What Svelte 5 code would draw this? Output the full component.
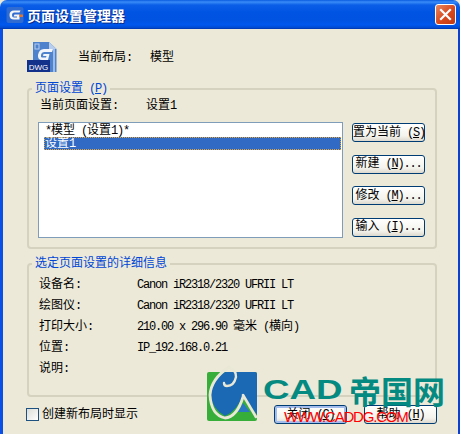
<script>
  const details = [
    ['设备名:', 'Canon iR2318/2320 UFRII LT'],
    ['绘图仪:', 'Canon iR2318/2320 UFRII LT'],
    ['打印大小:', '210.00 x 296.90 毫米 (横向)'],
    ['位置:', 'IP_192.168.0.21'],
    ['说明:', '']
  ];
  const sideButtons = [
    { name: '置为当前', key: 'S', tail: '' },
    { name: '新建', key: 'N', tail: '...' },
    { name: '修改', key: 'M', tail: '...' },
    { name: '输入', key: 'I', tail: '...' }
  ];

  // latin runs are squeezed so they keep the 6px cell of the dialog font
  const runs = (s) => s.match(/[\x00-\x7f]+|[^\x00-\x7f]+/g) ?? [];
</script>

{#snippet txt(s)}
  {#each runs(s) as run}{#if run.charCodeAt(0) < 128}<span class="lat">{run}</span>{:else}{run}{/if}{/each}
{/snippet}

{#snippet btn(item, extra = '')}
  <button class="btn {extra}">{item.name}<span class="lat">{' '}(<u>{item.key}</u>){item.tail}</span></button>
{/snippet}

<div class="window">
  <header class="titlebar">
    <svg class="app-icon" width="18" height="18" viewBox="0 0 18 18" aria-hidden="true">
      <rect x="0.5" y="1" width="17" height="16" rx="2" fill="#2f6bd0" />
      <path d="M14.500 4.500 H8 Q3.500 4.500 3.500 9 Q3.500 13.500 8 13.500 H13.500 V8.500 H8.500 L7.500 10.500 H11 V11.500 H8 Q6 11.500 6 9 Q6 6.500 8 6.500 H13.500 Z" fill="#f4f4f4" />
      <path d="M13.500 8.500 H17 V11 H13.500 Z" fill="#e0762a" />
    </svg>
    <span class="title">页面设置管理器</span>
    <button class="close" aria-label="关闭">
      <svg width="13" height="13" viewBox="0 0 13 13"><path d="M2 2 L11 11 M11 2 L2 11" stroke="#fff" stroke-width="2.2" stroke-linecap="square" /></svg>
    </button>
  </header>

  <main class="body">
    <div class="layout-row">
      <svg class="dwg" width="32" height="34" viewBox="0 0 32 34" aria-hidden="true">
        <path d="M6 1 H22 L29.500 8 V31 H6 Z" fill="#4f82cc" />
        <path d="M22 1 V8 H29.500 Z" fill="#b8cdec" />
        <rect x="8" y="3" width="4" height="5" fill="none" stroke="#b7cdf0" stroke-width="1" />
        <path d="M27 8 V31" stroke="#9cbce6" stroke-width="2" />
        <path d="M26 8 H17 Q12 8 11 14 Q10.500 19 15 19 H21 L22.500 13 H16.500 L16 15 H19.500 L19 16.500 H15 Q13.500 16.500 14 14 Q14.500 11 17.500 11 H25 Z" fill="#f2f6fc" />
        <rect x="0" y="19" width="23" height="12" fill="#13308a" />
        <text class="dwg-label" x="11.500" y="28.500" text-anchor="middle">DWG</text>
      </svg>
      <span class="layout-label">{@render txt('当前布局:')}</span>
      <span>模型</span>
    </div>

    <fieldset class="group setup">
      <legend>页面设置<span class="lat">{' '}(<u>P</u>)</span></legend>
      <div class="current-row">
        <span class="current-label">{@render txt('当前页面设置:')}</span>
        <span>{@render txt('设置1')}</span>
      </div>
      <div class="setup-main">
        <div class="listbox">
          <div class="item">{@render txt('*模型 (设置1)*')}</div>
          <div class="item selected">{@render txt('设置1')}</div>
        </div>
        <div class="side-buttons">
          {#each sideButtons as item}
            {@render btn(item)}
          {/each}
        </div>
      </div>
    </fieldset>

    <fieldset class="group info">
      <legend>选定页面设置的详细信息</legend>
      <dl>
        {#each details as [name, value]}
          <dt>{@render txt(name)}</dt>
          <dd>{@render txt(value)}</dd>
        {/each}
      </dl>
    </fieldset>

    <footer class="footer">
      <label class="check"><span class="box"></span>创建新布局时显示</label>
      <div class="footer-buttons">
        {@render btn({ name: '关闭', key: 'C', tail: '' }, 'default')}
        {@render btn({ name: '帮助', key: 'H', tail: '' })}
      </div>
    </footer>
  </main>

  <div class="watermark">
    <svg width="53" height="57" viewBox="0 0 53 57" aria-hidden="true">
      <rect x="2" y="7" width="50" height="49" rx="2" fill="#37ad3a" />
      <path d="M20 7 H50 Q52 7 52 9 V50 L38 30 Q32 46 20 51 Q7 44 6 30 Q8 14 20 7 Z" fill="#1b68b5" />
      <path d="M38 38 L45 47 H33 Z" fill="#2a78c4" />
      <g fill="none" stroke="#e9e7d6" stroke-linecap="round">
        <path d="M24 2 Q6 14 5 30 Q6 50 20 53 Q32 52 38 32" stroke-width="2.800" />
        <path d="M38 30 L51 52" stroke-width="2.600" />
        <path d="M24 3 Q31 4 31 12 Q29 21 22 21 Q19 21 19 18" stroke-width="2.400" />
      </g>
    </svg>
    <div class="brand"><span class="brand-latin">CAD</span><span class="brand-cjk">帝国网</span></div>
    <span class="url">WWW.CADDG.COM</span>
  </div>
</div>

<style>
  :global(body) {
    margin: 0;
    background: #ece9d8;
  }

  .window {
    position: relative;
    width: 460px;
    height: 434px;
    overflow: hidden;
    font: 12px/14px "Liberation Mono", "Noto Sans CJK SC", monospace;
    color: #000;
    background: #ece9d8;
    border-radius: 7px 7px 0 0;
  }

  .lat {
    letter-spacing: -1.2px;
    white-space: pre;
  }

  .titlebar {
    height: 29px;
    box-sizing: border-box;
    display: flex;
    align-items: center;
    padding: 0 4px 0 6px;
    background: linear-gradient(180deg, #0a5be0 0, #3a8cf8 2px, #0a5ee6 5px, #0054e3 12px, #0053e1 20px, #0058ee 25px, #0048cc 28px, #0031a8 29px);
  }

  .app-icon {
    flex: none;
  }

  .title {
    margin-left: 3px;
    font: bold 14px/18px "Noto Sans CJK SC", sans-serif;
    color: #fff;
    text-shadow: 1px 1px 0 #0a2a88;
  }

  .close {
    margin-left: auto;
    width: 21px;
    height: 21px;
    padding: 0;
    display: grid;
    place-items: center;
    border: 1px solid #fff;
    border-radius: 3px;
    background: linear-gradient(135deg, #e8875f, #d8481c 55%, #c43a12);
  }

  .body {
    height: 405px;
    box-sizing: border-box;
    display: flex;
    flex-direction: column;
    padding: 0 21px 0 24px;
    border-left: 3px solid #0a50e6;
    border-right: 2px solid #0a3fd0;
  }

  .layout-row {
    height: 53px;
    box-sizing: border-box;
    padding-top: 5px;
    display: flex;
    align-items: center;
    flex: none;
  }

  .dwg {
    flex: none;
    margin-right: 19px;
  }

  .dwg-label {
    font: 8px "Liberation Sans", sans-serif;
    fill: #fff;
  }

  .layout-label {
    width: 72px;
  }

  .group {
    margin: 0;
    padding: 0;
    box-sizing: border-box;
    border: 2px solid #d5d2bf;
    border-radius: 4px;
    min-width: 0;
    flex: none;
  }

  .group legend {
    margin-left: 3px;
    padding: 0 3px;
    color: #0046d5;
    line-height: 14px;
  }

  .setup {
    height: 167px;
  }

  .current-row {
    display: flex;
    padding: 3px 0 0 11px;
    height: 16px;
  }

  .current-label {
    width: 106px;
  }

  .setup-main {
    display: flex;
    padding: 7px 0 0 9px;
  }

  .listbox {
    width: 305px;
    height: 116px;
    box-sizing: border-box;
    border: 1px solid #7f9db9;
    background: #fff;
    padding: 1px 1px 1px 5px;
    flex: none;
  }

  .item {
    height: 13px;
    line-height: 14px;
    padding-left: 1px;
    white-space: pre;
  }

  .item.selected {
    background: #316ac5;
    color: #fff;
    outline: 1px dotted #e2a33a;
    outline-offset: -1px;
  }

  .side-buttons {
    display: flex;
    flex-direction: column;
    gap: 12.500px;
    margin: 1px 0 0 9px;
  }

  .btn {
    width: 73px;
    height: 19px;
    padding: 0;
    font: inherit;
    color: #000;
    border: 1px solid #003c74;
    border-radius: 3px;
    background: linear-gradient(180deg, #fff, #f4f3ec 70%, #dcd8ce);
    white-space: pre;
  }

  .info {
    margin-top: 8px;
    height: 140px;
  }

  dl {
    margin: 0;
    padding: 3px 0 0 10px;
    display: grid;
    grid-template-columns: 98px 1fr;
    grid-auto-rows: 21px;
    align-items: center;
  }

  dd {
    margin: 0;
  }

  .footer {
    display: flex;
    align-items: center;
    justify-content: space-between;
    margin-top: 8px;
  }

  .check {
    display: flex;
    align-items: center;
    gap: 3px;
    margin-left: -1px;
  }

  .box {
    width: 11px;
    height: 11px;
    border: 1px solid #1c5180;
    background: linear-gradient(135deg, #dcdcd7, #fff);
  }

  .footer-buttons {
    display: flex;
    gap: 17px;
  }

  .btn.default {
    box-shadow: inset 0 0 0 2px #a4bcec;
  }

  .watermark {
    position: absolute;
    left: 205px;
    top: 365px;
    width: 250px;
    height: 60px;
  }

  .watermark svg {
    position: absolute;
    left: 0;
    top: 0;
  }

  .brand {
    position: absolute;
    left: 58px;
    top: 9px;
    display: flex;
    align-items: center;
    height: 32px;
    color: #058a82;
    white-space: nowrap;
  }

  .brand-latin {
    width: 86px;
    font: bold 27px/32px "Liberation Sans", sans-serif;
    transform: scaleX(1.36);
    transform-origin: left;
  }

  .brand-cjk {
    font: bold 32px/32px "Noto Sans CJK SC", sans-serif;
  }

  .url {
    position: absolute;
    left: 79px;
    top: 44px;
    font: 15px/16px "Liberation Sans", sans-serif;
    letter-spacing: -1.2px;
    color: #f00;
    white-space: nowrap;
  }
</style>
